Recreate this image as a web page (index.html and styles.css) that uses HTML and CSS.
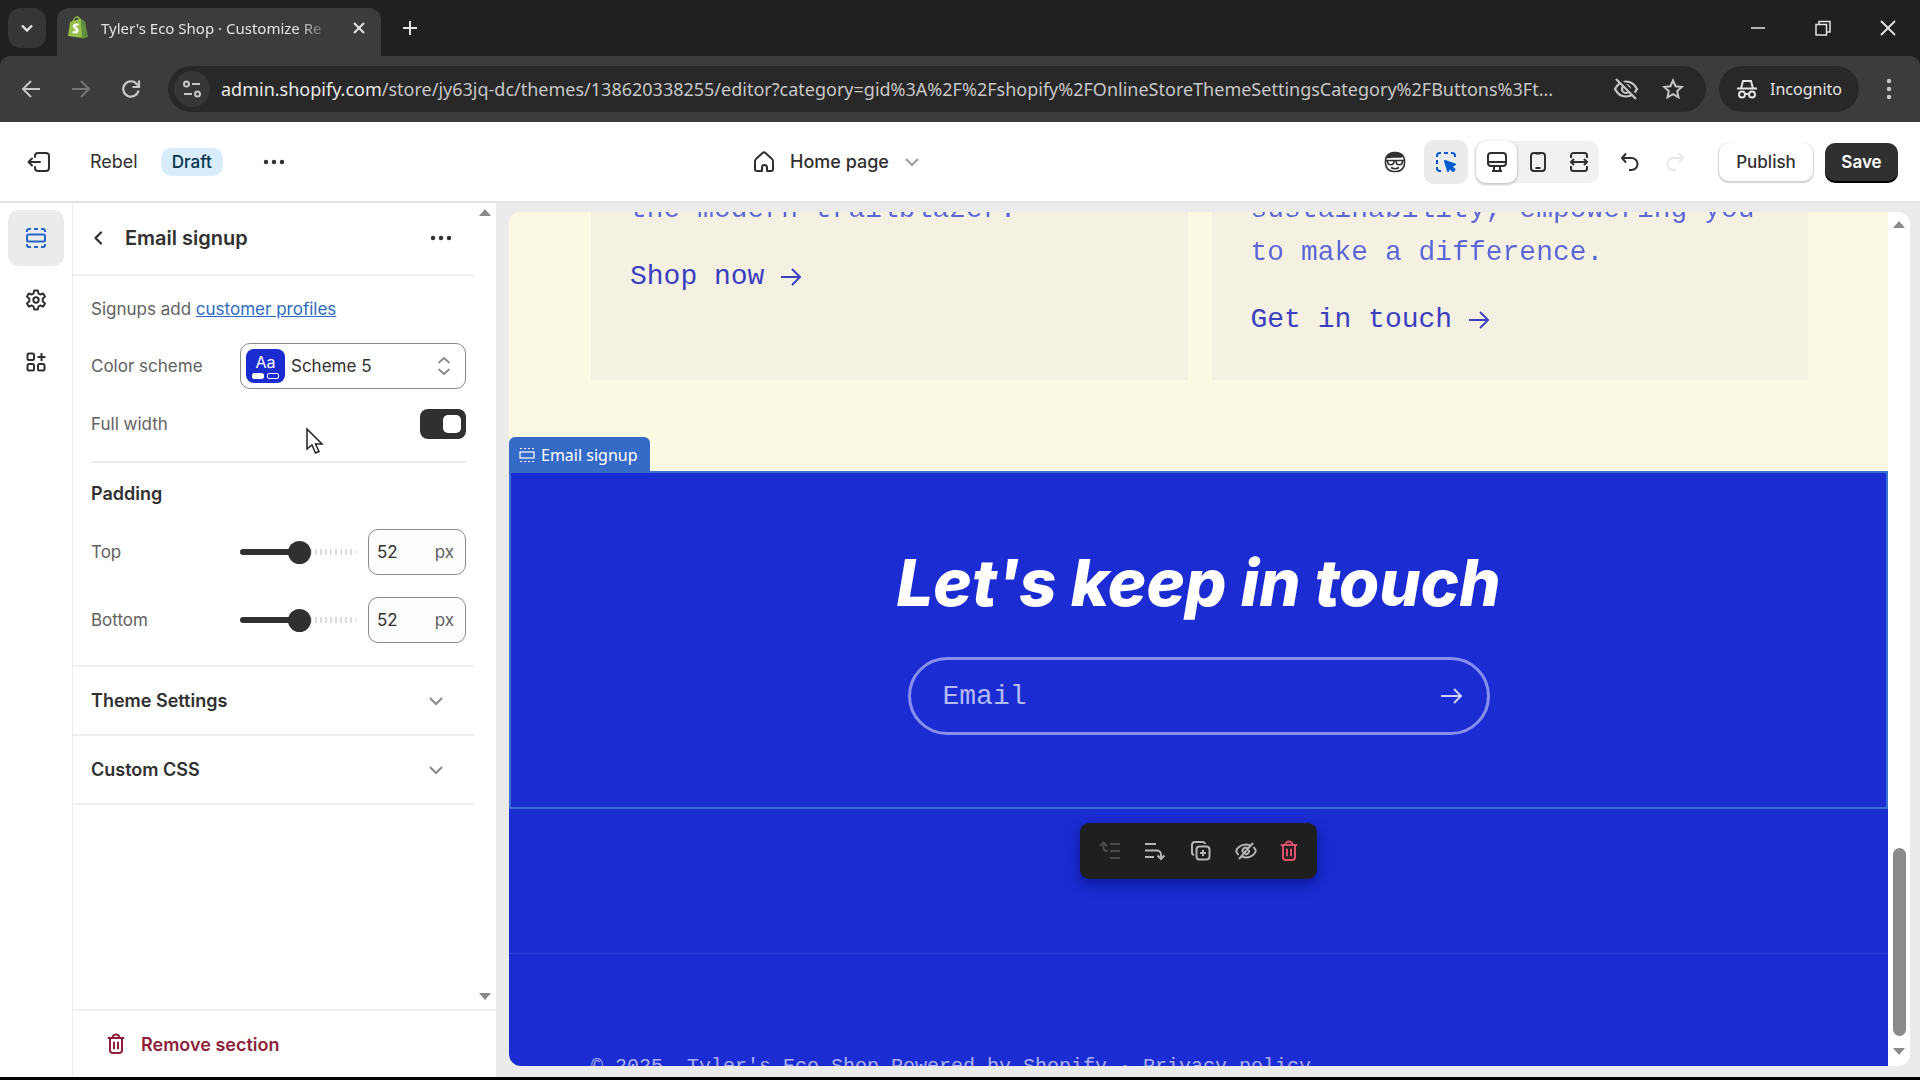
FILE: index.html
```html
<!DOCTYPE html>
<html lang="en">
<head>
    <meta charset="UTF-8">
    <meta name="viewport" content="width=device-width, initial-scale=1.0">
    <title>Tyler's Eco Shop · Customize Rebel</title>
    <link rel="stylesheet" href="styles.css">
</head>
<body>
    <div class="browser">
        <!-- Browser tabs -->
        <div class="tab-strip">
            <button class="tab-search" aria-label="Search tabs">
                <svg width="14" height="14" viewBox="0 0 14 14" fill="none" stroke="currentColor" stroke-width="2.4"><path d="M2 4.5l5 5 5-5"/></svg>
            </button>
            <div class="tab">
                <svg width="22" height="24" viewBox="0 0 22 24"><path fill="#95bf47" d="M3 6l11-3.500L16 22 1 20z"/><path fill="#5e8e3e" d="M14 3l4 2.500L21 21l-6 2z"/><path fill="none" stroke="#95bf47" stroke-width="1.500" d="M6 6c.5-3 2.500-5 4-5s2.500 1.500 2.500 4"/><path fill="none" stroke="#fff" stroke-width="2.400" d="M11.500 9c-2-1-4.500-.5-4.500 1.300 0 2 3.500 1.700 3.500 4.200 0 2-2.500 2.500-4.500 1"/></svg>
                <span class="tab-title">Tyler's Eco Shop · Customize Re</span>
                <button class="plain" aria-label="Close tab">
                    <svg width="14" height="14" viewBox="0 0 14 14" fill="none" stroke="currentColor" stroke-width="2"><path d="M2 2l10 10M12 2L2 12"/></svg>
                </button>
            </div>
            <button class="plain new-tab" aria-label="New tab">
                <svg width="16" height="16" viewBox="0 0 16 16" fill="none" stroke="currentColor" stroke-width="2"><path d="M8 1v14M1 8h14"/></svg>
            </button>
            <div class="window-controls">
                <button class="plain" aria-label="Minimize">
                    <svg width="16" height="16" viewBox="0 0 16 16" fill="none" stroke="currentColor" stroke-width="1.500"><path d="M1 8h14"/></svg>
                </button>
                <button class="plain" aria-label="Restore">
                    <svg width="16" height="16" viewBox="0 0 16 16" fill="none" stroke="currentColor" stroke-width="1.500"><path d="M1 4.500h10.500V15H1zM4 4.500V1.500h11V12h-3.500"/></svg>
                </button>
                <button class="plain" aria-label="Close window">
                    <svg width="16" height="16" viewBox="0 0 16 16" fill="none" stroke="currentColor" stroke-width="1.800"><path d="M1 1l14 14M15 1L1 15"/></svg>
                </button>
            </div>
        </div>

        <!-- Address bar -->
        <div class="nav-bar">
            <div class="nav-buttons">
                <button class="plain" aria-label="Back">
                    <svg width="20" height="20" viewBox="0 0 20 20" fill="none" stroke="currentColor" stroke-width="2"><path d="M19 10H2M10 2l-8 8 8 8"/></svg>
                </button>
                <button class="plain disabled" aria-label="Forward">
                    <svg width="20" height="20" viewBox="0 0 20 20" fill="none" stroke="currentColor" stroke-width="2"><path d="M1 10h17M10 2l8 8-8 8"/></svg>
                </button>
                <button class="plain" aria-label="Reload">
                    <svg width="20" height="20" viewBox="0 0 20 20" fill="none" stroke="currentColor" stroke-width="2.200"><path d="M17.500 11.500A7.700 7.700 0 1 1 16 5.200L18 7.500"/><path d="M18 1.500v6.500h-6.500"/></svg>
                </button>
            </div>
            <div class="address">
                <button class="site-info" aria-label="Site information">
                    <svg width="20" height="20" viewBox="0 0 20 20" fill="none" stroke="currentColor" stroke-width="2"><circle cx="4.500" cy="5" r="2.500"/><path d="M10 5h8M2 15h8"/><circle cx="15.500" cy="15" r="2.500"/></svg>
                </button>
                <p class="url"><b>admin.shopify.com</b>/store/jy63jq-dc/themes/138620338255/editor?category=gid%3A%2F%2Fshopify%2FOnlineStoreThemeSettingsCategory%2FButtons%3Ft...</p>
                <button class="plain" aria-label="Third-party cookies blocked">
                    <svg width="26" height="24" viewBox="0 0 26 24" fill="none" stroke="currentColor" stroke-width="2.200"><path d="M2 12c2.500-5 6.500-7.500 11-7.500s8.500 2.500 11 7.500c-2.500 5-6.500 7.500-11 7.500S4.500 17 2 12z"/><circle cx="13" cy="12" r="4"/><path stroke="#282828" stroke-width="3" d="M5 1l20 20"/><path d="M3 2l20 20"/></svg>
                </button>
                <button class="plain" aria-label="Bookmark this tab">
                    <svg width="22" height="22" viewBox="0 0 22 22" fill="none" stroke="currentColor" stroke-width="2"><path d="M11 2.500l2.600 5.700 6.200.7-4.600 4.200 1.300 6.200-5.500-3.200-5.500 3.200 1.300-6.200L2.200 8.900l6.200-.7z"/></svg>
                </button>
            </div>
            <button class="incognito">
                <svg width="22" height="22" viewBox="0 0 22 22" fill="none" stroke="currentColor" stroke-width="2"><path d="M1 10.500h20"/><path d="M5 10.500L7 3h8l2 7.500"/><circle cx="6" cy="16.500" r="3"/><circle cx="16" cy="16.500" r="3"/><path d="M9 16h4"/></svg>
                Incognito
            </button>
            <button class="plain" aria-label="Browser menu">
                <svg width="6" height="22" viewBox="0 0 6 22" fill="currentColor"><circle cx="3" cy="3" r="2.200"/><circle cx="3" cy="11" r="2.200"/><circle cx="3" cy="19" r="2.200"/></svg>
            </button>
        </div>
    </div>

    <!-- Theme editor header -->
    <header class="topbar">
        <div class="topbar-left">
            <button class="plain" aria-label="Exit editor">
                <svg width="24" height="22" viewBox="0 0 24 22" fill="none" stroke="currentColor" stroke-width="2" stroke-linecap="round" stroke-linejoin="round"><path d="M8 6V5a3 3 0 0 1 3-3h8a3 3 0 0 1 3 3v12a3 3 0 0 1-3 3h-8a3 3 0 0 1-3-3v-1M13 11H1.500M5 7.500L1.500 11 5 14.500"/></svg>
            </button>
            <span class="theme-name">Rebel</span>
            <span class="badge">Draft</span>
            <button class="plain" aria-label="More theme actions">
                <svg width="22" height="6" viewBox="0 0 22 6" fill="currentColor"><circle cx="3" cy="3" r="2.200"/><circle cx="11" cy="3" r="2.200"/><circle cx="19" cy="3" r="2.200"/></svg>
            </button>
        </div>
        <button class="page-picker">
            <svg width="22" height="22" viewBox="0 0 22 22" fill="none" stroke="currentColor" stroke-width="2" stroke-linejoin="round"><path d="M2 10.500c0-1 .3-1.700 1-2.400l6.500-6a2.200 2.200 0 0 1 3 0l6.500 6c.7.7 1 1.400 1 2.400V18a2 2 0 0 1-2 2h-4v-3.500a2.500 2.500 0 0 0-5 0V20H4a2 2 0 0 1-2-2z"/></svg>
            Home page
            <svg class="faded" width="16" height="10" viewBox="0 0 16 10" fill="none" stroke="currentColor" stroke-width="2"><path d="M2 2l6 6 6-6"/></svg>
        </button>
        <div class="topbar-right">
            <button class="plain assistant" aria-label="Sidekick">
                <svg width="22" height="22" viewBox="0 0 22 22" fill="none" stroke="currentColor" stroke-width="1.600"><rect x="1.500" y="1.500" width="19" height="19" rx="8"/><path fill="currentColor" d="M3 6.500C5 3 8 2 11 2c4 0 6 1.500 7 3.500-2 .8-4 .5-6 .5-4-.5-6 .5-9 .5z"/><path d="M1.500 9.500h19M3.500 10c0 5 6.500 5 6.500 0M12 10c0 5 6.500 5 6.500 0M7 16.500c2.500 1.500 5.500 1.500 8 0"/></svg>
            </button>
            <button class="inspector" aria-label="Toggle inspector">
                <svg width="24" height="24" viewBox="0 0 24 24" fill="none" stroke="currentColor" stroke-width="2"><path d="M3 7V5.500A2.500 2.500 0 0 1 5.500 3H7M10 3h4M17 3h1.500A2.500 2.500 0 0 1 21 5.500V7M3 10v4M3 17v1.500A2.500 2.500 0 0 0 5.500 21H7"/><path fill="currentColor" stroke-linejoin="round" d="M11 11l10 3.500-4 1.500 3.500 3.500-1.500 1.500-3.500-3.500-1.500 3.500z"/></svg>
            </button>
            <div class="devices">
                <button class="device active" aria-label="Desktop">
                    <svg width="22" height="22" viewBox="0 0 22 22" fill="none" stroke="currentColor" stroke-width="2"><rect x="2" y="2" width="18" height="13" rx="3"/><path d="M2 11h18M8 15v4M14 15v4M6 20h10"/></svg>
                </button>
                <button class="device" aria-label="Mobile">
                    <svg width="22" height="22" viewBox="0 0 22 22" fill="none" stroke="currentColor" stroke-width="2"><rect x="4" y="2" width="14" height="18" rx="3"/><path d="M8.500 2.500h5M8.500 17h5"/></svg>
                </button>
                <button class="device" aria-label="Full width">
                    <svg width="22" height="22" viewBox="0 0 22 22" fill="none" stroke="currentColor" stroke-width="2"><path d="M3 7V4.500A2.500 2.500 0 0 1 5.500 2h11A2.500 2.500 0 0 1 19 4.500V7M3 15v2.500A2.500 2.500 0 0 0 5.500 20h11a2.500 2.500 0 0 0 2.500-2.500V15M3 11h16M6 8l-3 3 3 3M16 8l3 3-3 3"/></svg>
                </button>
            </div>
            <button class="plain undo" aria-label="Undo">
                <svg width="20" height="20" viewBox="0 0 20 20" fill="none" stroke="currentColor" stroke-width="2"><path d="M6 1.500L2 6l4 4.500M2 6h9.500a6 6 0 0 1 0 12H9"/></svg>
            </button>
            <button class="plain redo" aria-label="Redo" disabled>
                <svg width="20" height="20" viewBox="0 0 20 20" fill="none" stroke="currentColor" stroke-width="2"><path d="M14 1.500L18 6l-4 4.500M18 6H8.500a6 6 0 0 0 0 12H11"/></svg>
            </button>
            <button class="publish">Publish</button>
            <button class="save">Save</button>
        </div>
    </header>

    <main class="editor">
        <nav class="rail">
            <button class="rail-item active" aria-label="Sections">
                <svg width="22" height="22" viewBox="0 0 22 22" fill="none" stroke="currentColor" stroke-width="2"><rect x="2" y="7.500" width="18" height="7" rx="1.500"/><path d="M2 5V4a2 2 0 0 1 2-2h2M9 2h4M16 2h2a2 2 0 0 1 2 2v1M2 17v1a2 2 0 0 0 2 2h2M9 20h4M16 20h2a2 2 0 0 0 2-2v-1"/></svg>
            </button>
            <button class="rail-item" aria-label="Theme settings">
                <svg width="22" height="22" viewBox="0 0 22 22" fill="none" stroke="currentColor" stroke-width="2" stroke-linejoin="round"><path d="M9.200 1.500h3.600l.7 3 1.700 1 3-1 1.800 3.100-2.300 2.100v2.600l2.300 2.100-1.800 3.100-3-1-1.700 1-.7 3H9.200l-.7-3-1.700-1-3 1L2 14.400l2.300-2.100V9.700L2 7.600l1.800-3.100 3 1 1.700-1z"/><circle cx="11" cy="11" r="2.700"/></svg>
            </button>
            <button class="rail-item" aria-label="App embeds">
                <svg width="22" height="22" viewBox="0 0 22 22" fill="none" stroke="currentColor" stroke-width="2"><rect x="2.500" y="2.500" width="6.500" height="6.500" rx="1.500"/><rect x="2.500" y="13" width="6.500" height="6.500" rx="1.500"/><rect x="13" y="13" width="6.500" height="6.500" rx="1.500"/><path d="M16.500 2v8M12.500 6h8"/></svg>
            </button>
        </nav>

        <aside class="panel">
            <div class="panel-body">
                <div class="settings">
                    <div class="panel-header">
                        <button class="plain" aria-label="Back to sections">
                            <svg width="14" height="14" viewBox="0 0 14 14" fill="none" stroke="currentColor" stroke-width="2.200" stroke-linecap="round" stroke-linejoin="round"><path d="M9 1.500L3.500 7 9 12.500"/></svg>
                        </button>
                        <h1>Email signup</h1>
                        <button class="plain" aria-label="Section actions">
                            <svg width="22" height="6" viewBox="0 0 22 6" fill="currentColor"><circle cx="3" cy="3" r="2.200"/><circle cx="11" cy="3" r="2.200"/><circle cx="19" cy="3" r="2.200"/></svg>
                        </button>
                    </div>
                    <div class="fields">
                        <p class="hint">Signups add <a href="#">customer profiles</a></p>
                        <div class="field scheme-field">
                            <label for="scheme">Color scheme</label>
                            <div class="scheme">
                                <select id="scheme">
                                    <option>Scheme 5</option>
                                </select>
                                <span class="swatch"><span>Aa</span><i class="pill"></i><i class="pill outline"></i></span>
                                <svg class="sort" width="14" height="20" viewBox="0 0 14 20" fill="none" stroke="currentColor" stroke-width="1.800" stroke-linecap="round" stroke-linejoin="round"><path d="M2 6.500L7 2l5 4.500M2 13.500L7 18l5-4.500"/></svg>
                            </div>
                        </div>
                        <div class="field toggle-field">
                            <label for="full-width">Full width</label>
                            <input class="toggle" type="checkbox" id="full-width" checked>
                        </div>
                        <h2>Padding</h2>
                        <div class="field range-field">
                            <label for="top">Top</label>
                            <input class="slider" type="range" id="top" min="0" max="100" value="52">
                            <div class="number"><input type="text" value="52" aria-label="Top padding"><span>px</span></div>
                        </div>
                        <div class="field range-field">
                            <label for="bottom">Bottom</label>
                            <input class="slider" type="range" id="bottom" min="0" max="100" value="52">
                            <div class="number"><input type="text" value="52" aria-label="Bottom padding"><span>px</span></div>
                        </div>
                    </div>
                    <button class="accordion">
                        Theme Settings
                        <svg width="16" height="10" viewBox="0 0 16 10" fill="none" stroke="currentColor" stroke-width="2"><path d="M2 2l6 6 6-6"/></svg>
                    </button>
                    <button class="accordion">
                        Custom CSS
                        <svg width="16" height="10" viewBox="0 0 16 10" fill="none" stroke="currentColor" stroke-width="2"><path d="M2 2l6 6 6-6"/></svg>
                    </button>
                </div>
                <div class="scrollbar">
                    <span class="arrow-up"></span>
                    <span class="arrow-down"></span>
                </div>
            </div>
            <div class="panel-footer">
                <button class="remove">
                    <svg width="18" height="22" viewBox="0 0 18 22" fill="none" stroke="currentColor" stroke-width="2" stroke-linecap="round"><path d="M1.500 5h15M5.500 5a3.500 3.500 0 0 1 7 0M3 5v12a3 3 0 0 0 3 3h6a3 3 0 0 0 3-3V5M7 9.500v6M11 9.500v6"/></svg>
                    Remove section
                </button>
            </div>
        </aside>

        <section class="canvas">
            <div class="preview">
                <div class="site">
                    <div class="cards">
                        <div class="card">
                            <p>the modern trailblazer.</p>
                            <a href="#">Shop now <svg width="22" height="20" viewBox="0 0 22 20" fill="none" stroke="currentColor" stroke-width="2"><path d="M1 10h19M12 2l8 8-8 8"/></svg></a>
                        </div>
                        <div class="card">
                            <p>sustainability, empowering you to make a difference.</p>
                            <a href="#">Get in touch <svg width="22" height="20" viewBox="0 0 22 20" fill="none" stroke="currentColor" stroke-width="2"><path d="M1 10h19M12 2l8 8-8 8"/></svg></a>
                        </div>
                    </div>

                    <div class="signup">
                        <span class="section-label">
                            <svg width="16" height="16" viewBox="0 0 16 16" fill="none" stroke="currentColor" stroke-width="1.200"><rect x="1" y="5" width="14" height="6"/><path d="M1 1.500h2M5 1.500h2M9 1.500h2M13 1.500h2M1 14.500h2M5 14.500h2M9 14.500h2M13 14.500h2"/></svg>
                            Email signup
                        </span>
                        <h2>Let's keep in touch</h2>
                        <div class="email">
                            <input type="email" placeholder="Email" aria-label="Email">
                            <button class="plain" aria-label="Subscribe">
                                <svg width="26" height="20" viewBox="0 0 26 20" fill="none" stroke="currentColor" stroke-width="2"><path d="M2 10h20M15 3l7 7-7 7"/></svg>
                            </button>
                        </div>
                        <div class="section-tools">
                            <button class="plain muted" aria-label="Move up">
                                <svg width="22" height="22" viewBox="0 0 22 22" fill="none" stroke="currentColor" stroke-width="2"><path d="M11 4h10M11 11h10M11 18h10M1 6l3.500-3.500L8 6M4.500 3v5a3 3 0 0 0 3 3H9"/></svg>
                            </button>
                            <button class="plain" aria-label="Move down">
                                <svg width="22" height="22" viewBox="0 0 22 22" fill="none" stroke="currentColor" stroke-width="2"><path d="M1 4h11M1 10.500h12a4 4 0 0 1 4 4V19M1 17h9M13.500 15.500L17 19l3.500-3.500"/></svg>
                            </button>
                            <button class="plain" aria-label="Duplicate">
                                <svg width="22" height="22" viewBox="0 0 22 22" fill="none" stroke="currentColor" stroke-width="2"><rect x="6.500" y="6.500" width="13" height="13" rx="3"/><path d="M4 15a2.500 2.500 0 0 1-2-2.500V5a3 3 0 0 1 3-3h7.500A2.500 2.500 0 0 1 15 4M13 10v6M10 13h6"/></svg>
                            </button>
                            <button class="plain" aria-label="Hide">
                                <svg width="22" height="22" viewBox="0 0 22 22" fill="none" stroke="currentColor" stroke-width="2"><path d="M3.500 15C2 13.500 1.300 12 1.300 11 1.300 9 5 4.500 11 4.500c1.500 0 2.800.3 4 .8M18.500 7c1.500 1.500 2.200 3 2.200 4 0 2-3.700 6.500-9.700 6.500-1.500 0-2.800-.3-4-.8M8 12.500a3.200 3.200 0 0 1 4.500-4.300M14 10a3.200 3.200 0 0 1-4 4M18 3L4 19"/></svg>
                            </button>
                            <button class="plain danger" aria-label="Remove">
                                <svg width="18" height="22" viewBox="0 0 18 22" fill="none" stroke="currentColor" stroke-width="2" stroke-linecap="round"><path d="M1.500 5h15M5.500 5a3.500 3.500 0 0 1 7 0M3 5v12a3 3 0 0 0 3 3h6a3 3 0 0 0 3-3V5M7 9.500v6M11 9.500v6"/></svg>
                            </button>
                        </div>
                    </div>

                    <footer class="site-footer">
                        <p>© 2025, Tyler's Eco Shop Powered by Shopify · <a href="#">Privacy policy</a></p>
                    </footer>
                </div>
                <div class="scrollbar">
                    <span class="arrow-up"></span>
                    <span class="thumb"></span>
                    <span class="arrow-down"></span>
                </div>
            </div>
        </section>
    </main>

    <svg class="cursor" width="20" height="28" viewBox="0 0 20 28" fill="#fff" stroke="#222" stroke-width="1.500"><path d="M2 2v20l5-4 3.500 8 3.500-1.500L10.500 17H17z"/></svg>
</body>
</html>
```
FILE: styles.css
```css
* {
    box-sizing: border-box;
}
body {
    margin: 0;
    height: 100vh;
    display: flex;
    flex-direction: column;
    overflow: hidden;
    background: #fff;
    border-bottom: 3px solid #000;
    font-family: 'Inter', sans-serif;
    font-size: 17px;
    color: #303030;
}
h1, h2, p {
    margin: 0;
}
button {
    font-family: inherit;
    font-size: inherit;
    color: inherit;
    border: none;
    background: none;
    padding: 0;
    display: flex;
    align-items: center;
    justify-content: center;
    cursor: pointer;
}
svg {
    flex: none;
    display: block;
}

/* Browser */
.browser {
    background: #202020;
    font-family: 'Noto Sans', sans-serif;
}
.tab-strip {
    display: flex;
    align-items: center;
    height: 56px;
    padding: 0 24px 0 8px;
    color: #e3e3e3;
}
.tab-search {
    width: 38px;
    height: 40px;
    border-radius: 13px;
    background: #363636;
}
.tab {
    display: flex;
    align-items: center;
    align-self: flex-end;
    gap: 12px;
    width: 324px;
    height: 48px;
    margin-left: 11px;
    padding: 0 15px 8px 10px;
    background: #3c3c3c;
    border-radius: 12px 12px 0 0;
}
.tab-title {
    flex: 1;
    white-space: nowrap;
    font-size: 15px;
    margin-right: 8px;
    -webkit-mask-image: linear-gradient(to right, #000 85%, transparent);
    mask-image: linear-gradient(to right, #000 85%, transparent);
}
.new-tab {
    margin-left: 21px;
}
.window-controls {
    display: flex;
    gap: 49px;
    margin-left: auto;
}
.nav-bar {
    display: flex;
    align-items: center;
    height: 66px;
    padding: 0 28px 0 21px;
    border-radius: 10px 10px 0 0;
    background: #3c3c3c;
    color: #c7c7c7;
}
.nav-buttons {
    display: flex;
    gap: 30px;
}
.nav-buttons .disabled {
    color: #777;
}
.address {
    flex: 1;
    display: flex;
    align-items: center;
    gap: 23px;
    min-width: 0;
    height: 46px;
    margin: 0 13px 0 27px;
    padding: 0 22px 0 6px;
    background: #282828;
    border-radius: 23px;
}
.site-info {
    width: 36px;
    height: 36px;
    border-radius: 50%;
    background: #363636;
}
.url {
    flex: 1;
    min-width: 0;
    margin-left: -12px;
    overflow: hidden;
    white-space: nowrap;
    font-size: 18px;
}
.url b {
    font-weight: 400;
    color: #e8e8e8;
}
.incognito {
    gap: 12px;
    width: 140px;
    height: 46px;
    margin-right: 27px;
    border-radius: 23px;
    background: #282828;
    color: #e3e3e3;
    font-size: 16px;
}

/* Editor header */
.topbar {
    display: grid;
    grid-template-columns: 1fr auto 1fr;
    align-items: center;
    height: 81px;
    padding: 0 22px 0 27px;
    border-bottom: 2px solid #e3e3e3;
}
.topbar-left {
    display: flex;
    align-items: center;
}
.theme-name {
    margin: 0 23px 0 39px;
    font-size: 18px;
}
.badge {
    margin-right: 40px;
    padding: 4px 11px;
    border-radius: 10px;
    background: #d8ecfc;
    color: #00344d;
    font-weight: 500;
    line-height: 20px;
}
.page-picker {
    gap: 15px;
    margin-right: 252px;
    font-size: 18px;
    font-weight: 500;
}
.faded {
    color: #9a9a9a;
}
.topbar-right {
    display: flex;
    align-items: center;
    justify-content: flex-end;
}
.assistant {
    margin-right: 18px;
}
.inspector {
    width: 44px;
    height: 44px;
    border-radius: 10px;
    background: #ebebeb;
    color: #005bd3;
}
.devices {
    display: flex;
    height: 42px;
    margin: 0 21px 0 8px;
    border-radius: 10px;
    background: #f1f1f1;
}
.device {
    width: 41px;
    border-radius: 10px;
}
.device.active {
    background: #fff;
    box-shadow: 0 1px 2px 1px #ccc;
}
.undo {
    margin-right: 25px;
}
.redo {
    color: #e8e8e8;
    margin-right: 34px;
}
.publish, .save {
    height: 38px;
    border-radius: 10px;
    font-weight: 500;
}
.publish {
    width: 94px;
    margin-right: 12px;
    box-shadow: 0 1px 1px 1px #d4d4d4;
}
.save {
    width: 73px;
    background: #303030;
    box-shadow: 0 2px 0 #000;
    color: #fff;
    font-weight: 600;
}

/* Sidebar */
.editor {
    flex: 1;
    display: flex;
    min-height: 0;
}
.rail {
    display: flex;
    flex-direction: column;
    gap: 6px;
    width: 73px;
    padding: 7px 8px;
    border-right: 1px solid #ebebeb;
}
.rail-item {
    width: 56px;
    height: 56px;
    border-radius: 10px;
}
.rail-item.active {
    background: #ebebeb;
    color: #2563c8;
}
.panel {
    display: flex;
    flex-direction: column;
    width: 423px;
}
.panel-body {
    flex: 1;
    display: flex;
    min-height: 0;
}
.settings {
    flex: 1;
    min-width: 0;
}
.scrollbar {
    flex: none;
    display: flex;
    flex-direction: column;
    align-items: center;
    width: 22px;
    padding: 6px 0 9px;
}
.arrow-up, .arrow-down {
    border: 6px solid transparent;
}
.arrow-up {
    border-top: none;
    border-bottom: 7px solid #8a8a8a;
}
.arrow-down {
    margin-top: auto;
    border-bottom: none;
    border-top: 7px solid #8a8a8a;
}
.panel-header {
    display: flex;
    align-items: center;
    gap: 19px;
    height: 73px;
    padding: 0 22px 2px 19px;
    border-bottom: 2px solid #efefef;
}
.panel-header h1 {
    flex: 1;
    font-size: 20px;
    font-weight: 600;
}
.fields {
    padding: 20px 8px 22px 18px;
    border-bottom: 2px solid #efefef;
    color: #616161;
}
.hint {
    line-height: 26px;
    margin-bottom: 21px;
}
.hint a {
    color: #2a6bc0;
}
.field {
    display: flex;
    align-items: center;
    height: 46px;
}
.field label {
    width: 149px;
}
.scheme-field {
    margin-bottom: 20px;
}
.scheme {
    position: relative;
    flex: 1;
}
.scheme select {
    width: 100%;
    height: 46px;
    padding: 0 50px;
    border: 1px solid #8a8a8a;
    border-radius: 10px;
    background: #fff;
    color: #303030;
    font: inherit;
    appearance: none;
}
.swatch {
    position: absolute;
    left: 6px;
    top: 6px;
    display: grid;
    grid-template-columns: 12px 12px;
    justify-content: center;
    align-content: center;
    gap: 2px 3px;
    width: 39px;
    height: 34px;
    border-radius: 8px;
    background: #1b2dd2;
    color: #fff;
    font-size: 16px;
    line-height: 17px;
}
.swatch span {
    grid-column: span 2;
    text-align: center;
}
.swatch .pill {
    height: 6px;
    border: 1px solid #fff;
    border-radius: 2px;
    background: #fff;
}
.swatch .outline {
    background: none;
}
.sort {
    position: absolute;
    right: 15px;
    top: 13px;
    color: #8a8a8a;
}
.toggle-field {
    height: 30px;
    justify-content: space-between;
}
.toggle {
    appearance: none;
    display: flex;
    justify-content: flex-end;
    width: 46px;
    height: 30px;
    margin: 0;
    padding: 6px 5px;
    border-radius: 8px;
    background: #303030;
}
.toggle::before {
    content: '';
    width: 18px;
    height: 18px;
    border-radius: 5px;
    background: #fff;
}
.fields h2 {
    margin-top: 22px;
    padding: 20px 0 24px;
    border-top: 2px solid #ebebeb;
    color: #303030;
    font-size: 18px;
    font-weight: 600;
    line-height: 22px;
}
.range-field + .range-field {
    margin-top: 22px;
}
.slider {
    appearance: none;
    flex: 1;
    min-width: 0;
    height: 24px;
    margin: 0 12px 0 0;
    background: none;
}
.slider::-webkit-slider-runnable-track {
    height: 6px;
    border-radius: 3px;
    background: linear-gradient(#303030, #303030) 0 0 / 52% 100% no-repeat,
        repeating-linear-gradient(to right, #dcdcdc 0 2px, #fff 2px 5px);
}
.slider::-webkit-slider-thumb {
    appearance: none;
    width: 23px;
    height: 23px;
    margin-top: -8px;
    border-radius: 50%;
    background: #303030;
}
.number {
    display: flex;
    align-items: center;
    width: 98px;
    height: 46px;
    padding: 0 11px 0 8px;
    border: 1px solid #8a8a8a;
    border-radius: 10px;
    background: #fdfdfd;
}
.number input {
    flex: 1;
    min-width: 0;
    padding: 0;
    border: none;
    background: none;
    color: #303030;
    font: inherit;
}
.accordion {
    width: 100%;
    height: 69px;
    padding: 0 30px 0 18px;
    border-bottom: 2px solid #efefef;
    justify-content: space-between;
    font-size: 18px;
    font-weight: 600;
}
.accordion svg {
    color: #8a8a8a;
}
.panel-footer {
    height: 68px;
    padding: 0 34px;
    border-top: 2px solid #efefef;
    display: flex;
}
.remove {
    gap: 16px;
    color: #8e1f3b;
    font-size: 18px;
    font-weight: 600;
}

/* Store preview */
.canvas {
    flex: 1;
    display: flex;
    min-width: 0;
    padding: 9px 10px 11px 13px;
    background: #ebebeb;
}
.preview {
    flex: 1;
    display: flex;
    min-width: 0;
    overflow: hidden;
    background: #fff;
    border-radius: 12px;
}
.preview .scrollbar {
    padding: 9px 0 11px;
}
.thumb {
    width: 13px;
    height: 188px;
    margin: auto 0 12px;
    border-radius: 7px;
    background: #8a8a8a;
}
.preview .arrow-down {
    margin-top: 0;
}
.site {
    flex: 1;
    min-width: 0;
    background: #fcf9e3;
    font-family: 'Liberation Mono', monospace;
    font-size: 28px;
}
.cards {
    display: flex;
    gap: 24px;
    margin-top: -24px;
    padding: 0 80px 91px 82px;
}
.card {
    flex: 1;
    padding: 0 38px 39px 39px;
    background: #f5f1e2;
    color: #1b2dd2;
}
.card p {
    line-height: 43px;
    opacity: 0.7;
}
.card a {
    display: inline-flex;
    align-items: center;
    gap: 16px;
    margin-top: 24px;
    line-height: 43px;
    color: #3a3fc0;
    text-decoration: none;
}
.signup {
    position: relative;
    display: flex;
    flex-direction: column;
    align-items: center;
    height: 338px;
    padding-top: 65px;
    border: 2px solid #3b6fd0;
    background: #1b2dd2;
    color: #fff;
}
.section-label {
    position: absolute;
    left: -2px;
    bottom: 100%;
    display: flex;
    align-items: center;
    gap: 6px;
    height: 36px;
    padding: 0 12px 0 10px;
    border-radius: 6px 6px 0 0;
    background: #356ac6;
    font-family: 'Noto Sans', sans-serif;
    font-size: 16px;
}
.signup h2 {
    font-family: 'Inter', sans-serif;
    font-size: 65px;
    font-style: italic;
    font-weight: 800;
    line-height: 90px;
}
.email {
    display: flex;
    align-items: center;
    width: 582px;
    height: 78px;
    margin-top: 29px;
    padding: 0 22px 0 32px;
    border: 3px solid #8890ec;
    border-radius: 39px;
    color: #cdd1f7;
}
.email input {
    flex: 1;
    min-width: 0;
    padding: 0;
    border: none;
    background: none;
    color: #fff;
    font: inherit;
}
.email input::placeholder {
    color: #b3b9f3;
}
.section-tools {
    position: absolute;
    top: calc(100% + 16px);
    display: flex;
    align-items: center;
    justify-content: space-between;
    width: 237px;
    height: 56px;
    padding: 0 19px;
    border-radius: 9px;
    background: #1f1f1f;
    box-shadow: 0 5px 14px #0a1699;
    color: #b5b5b5;
}
.muted {
    color: #4a4a4a;
}
.danger {
    color: #e0506a;
}
.site-footer {
    height: 300px;
    padding: 246px 82px 0;
    background: linear-gradient(#3042d9, #3042d9) 0 144px / 100% 1px no-repeat #1b2dd2;
    color: #a9b0f2;
    font-size: 20px;
    line-height: 24px;
}
.site-footer a {
    color: inherit;
    text-decoration: none;
}
.cursor {
    position: absolute;
    left: 305px;
    top: 427px;
}
```
